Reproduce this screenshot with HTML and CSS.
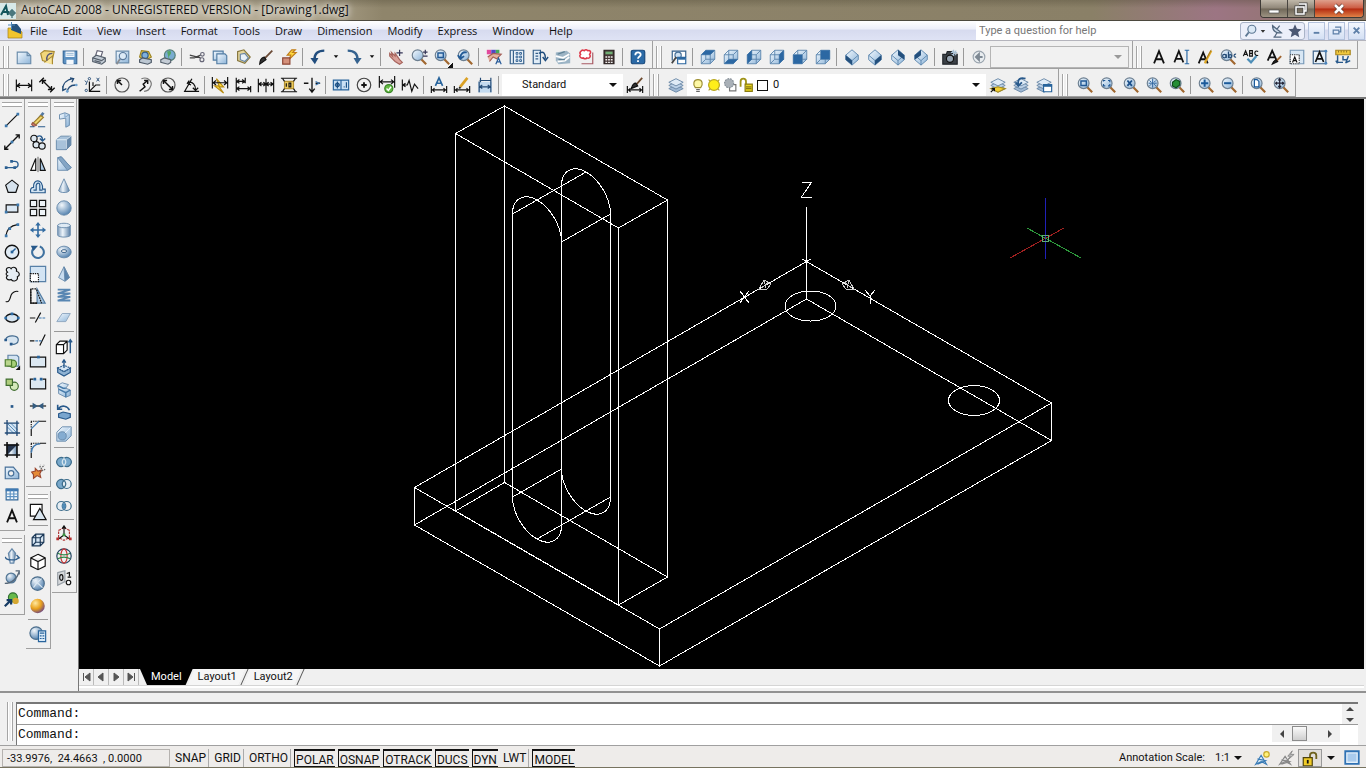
FILE: index.html
```html
<!DOCTYPE html>
<html lang="en">
<head>
<meta charset="utf-8">
<title>AutoCAD 2008 - UNREGISTERED VERSION - [Drawing1.dwg]</title>
<link rel="stylesheet" href="styles.css">
</head>
<body>
<svg class="sprites" aria-hidden="true">
<defs>
<linearGradient id="gb" x1="0" y1="0" x2="1" y2="1"><stop offset="0" stop-color="#f4faff"/><stop offset="1" stop-color="#8db4d8"/></linearGradient>
<linearGradient id="gs" x1="0" y1="0" x2="1" y2="0"><stop offset="0" stop-color="#7f9cba"/><stop offset=".4" stop-color="#edf4fa"/><stop offset="1" stop-color="#5b80a6"/></linearGradient>
<radialGradient id="gr" cx=".35" cy=".3" r=".8"><stop offset="0" stop-color="#f2f7fb"/><stop offset="1" stop-color="#4577a8"/></radialGradient>
<radialGradient id="go" cx=".35" cy=".3" r=".8"><stop offset="0" stop-color="#ffe9a0"/><stop offset=".5" stop-color="#e9a11c"/><stop offset="1" stop-color="#5a3990"/></radialGradient>
</defs>
<!-- shared pieces -->
<symbol id="lens" viewBox="0 0 20 20"><path d="M12 12l6 6" stroke="#a0672f" stroke-width="2.4"/><circle cx="8.500" cy="8" r="6" fill="url(#gb)" stroke="#6d7f90"/></symbol>
<symbol id="dimh" viewBox="0 0 20 20"><path d="M1.500 4v13M18.500 4v13M2 10.500h16M5.500 8l-3 2.500 3 2.500M14.500 8l3 2.500-3 2.500"/></symbol>
<symbol id="dimlow" viewBox="0 0 20 20"><path d="M1.500 11v8M18.500 11v8M2 15.500h16M5 13.500l-2 2 2 2M15 13.500l2 2-2 2"/></symbol>
<symbol id="sheets" viewBox="0 0 20 20"><g stroke="#6886a5" stroke-width="1"><path d="M2 14l8-4 8 4-8 4z" fill="#9eb8d4"/><path d="M2 10.500l8-4 8 4-8 4z" fill="#bdd2e8"/><path d="M2 7l8-4 8 4-8 4z" fill="#dfebf6"/></g></symbol>
<symbol id="cube" viewBox="0 0 20 20"><g stroke="#5a84ad" stroke-width="1"><path d="M2.500 7.500l5-5h10v10l-5 5h-10z" fill="url(#gb)"/><path d="M2.500 7.500h10v10M12.500 7.500l5-5M7.500 2.500v10h10M7.500 12.500l-5 5"/></g></symbol>
<symbol id="gem" viewBox="0 0 20 20"><g stroke="#5a84ad" stroke-width="1"><path d="M10 2l7 6v5l-7 6-7-6V8z" fill="url(#gb)"/><path d="M3 8l7 6 7-6M10 14v5"/></g></symbol>
<!-- standard -->
<symbol id="new" viewBox="0 0 20 20"><path d="M2.500 4.500h11l4 4v9h-15z" fill="url(#gb)" stroke="#6a8cab"/><path d="M13.500 4.500v4h4" stroke="#6a8cab"/></symbol>
<symbol id="open" viewBox="0 0 20 20"><path d="M3 6l4-3 11 1-3 13-10-3z" fill="#f1d67a" stroke="#a98a31"/><path d="M7 16l9-7v9" fill="#fae79f" stroke="#a98a31"/><path d="M16 6c-5 0-7 3-6 8" stroke="#557" stroke-width="1.600"/></symbol>
<symbol id="save" viewBox="0 0 20 20"><path d="M2.500 3.500h15v14h-14l-1-1z" fill="#5c91c2" stroke="#386a9b"/><path d="M5 4h10v6H5zM6 13h8v5H6z" fill="#f4f8fc" stroke="none"/><path d="M6 6h8M6 8h8" stroke="#8fb2d1" stroke-width="1"/></symbol>
<symbol id="print" viewBox="0 0 20 20"><path d="M6 9l2-6 6 1-2 6" fill="#fff" stroke="#667"/><path d="M3 11l4-3 10 3v4l-4 3-10-3z" fill="#c4cdd6" stroke="#555f6b"/><path d="M3 11l10 3 4-3M5 14l7 2" stroke="#555f6b"/></symbol>
<symbol id="preview" viewBox="0 0 20 20"><path d="M3.500 3.500h14v13h-14z" fill="url(#gb)" stroke="#6a8cab"/><path d="M8 12l-4 6" stroke="#8a8d92" stroke-width="2"/><circle cx="11" cy="9" r="4" fill="#dceaf6" stroke="#58789b"/></symbol>
<symbol id="publish" viewBox="0 0 20 20"><path d="M6 3l8 1 3 6-7 4-6-4z" fill="#f0d052" stroke="#9c8422"/><circle cx="10" cy="8" r="3.500" fill="#7fb0dd" stroke="#315c88"/><path d="M4 13l3-2 10 2v3l-4 2-9-2z" fill="#bcc7d2" stroke="#4d5967"/></symbol>
<symbol id="globe" viewBox="0 0 20 20"><circle cx="12" cy="8" r="6" fill="#79acd0" stroke="#557e77"/><path d="M9 4c4-2 6 1 3 4s2 4-1 5" fill="#53a566" stroke="none"/><path d="M2 13l4-2 7 2v3l-3 2-8-2z" fill="#c4ccd5" stroke="#56616d"/></symbol>
<symbol id="cut" viewBox="0 0 20 20"><path d="M2 8l12 3M2 11h5l7-3" stroke="#444" stroke-width="1.500"/><circle cx="16" cy="7" r="2" stroke="#667"/><circle cx="15.500" cy="13" r="2.200" stroke="#667"/></symbol>
<symbol id="copy" viewBox="0 0 20 20"><g fill="url(#gb)" stroke="#527ca3"><path d="M2.500 3.500h11v10h-11z"/><path d="M6.500 6.500h9l2 2v9h-11z"/></g></symbol>
<symbol id="paste" viewBox="0 0 20 20"><path d="M4 4l7-2 7 8-6 7-8-3z" fill="#e4d59b" stroke="#87773f"/><path d="M7 7l5-1 4 5-4 4-5-2z" fill="#e8f1f9" stroke="#6886a5"/></symbol>
<symbol id="brush" viewBox="0 0 20 20"><path d="M17 3l-9 9" stroke="#6b4a36" stroke-width="2"/><path d="M8 10l2 3-7 5c0-4 2-7 5-8z" fill="#333"/></symbol>
<symbol id="block" viewBox="0 0 20 20"><path d="M13 2l-5 6 4 0-2 5 8-8h-4l3-3z" fill="#ffda3d" stroke="#c07d1d"/><path d="M3 11h8v7H3z" fill="#d5917b" stroke="#8d4635"/></symbol>
<symbol id="undo" viewBox="0 0 20 20"><path d="M17 3C10 3 6 6 6 13" stroke="#214d7e" stroke-width="2.600"/><path d="M1.500 11h9L6.500 18z" fill="#214d7e" stroke="none"/></symbol>
<symbol id="redo" viewBox="0 0 20 20"><path d="M3 3c7 0 11 3 11 10" stroke="#35628f" stroke-width="2.600"/><path d="M9.500 11h9L13.500 18z" fill="#35628f" stroke="none"/></symbol>
<symbol id="down" viewBox="0 0 10 20"><path d="M2.500 8h5L5 11z" fill="#111" stroke="none"/></symbol>
<symbol id="pan" viewBox="0 0 20 20"><path d="M3 6l3 3-1-4 4 4 0-3 5 7 3 3-3 2-5-3-6-6z" fill="#dba29b" stroke="#a7645d"/><path d="M14 2v7M10.500 5.500h7" stroke="#335"/></symbol>
<symbol id="zrt" viewBox="0 0 20 20"><use href="#lens"/><path d="M17 2v5M14.500 4.500h5M14.500 9h5" stroke="#335"/></symbol>
<symbol id="zwin" viewBox="0 0 20 20"><use href="#lens"/><path d="M5.500 5.500h6v5h-6z" stroke="#225a96" stroke-width="1.600"/></symbol>
<symbol id="zprev" viewBox="0 0 20 20"><use href="#lens"/><path d="M5 11c0-5 3-7 7-6M2 8l3 4 4-3" stroke="#225a96" stroke-width="2"/></symbol>
<symbol id="props" viewBox="0 0 20 20"><path d="M2 2h5v5H2z" fill="#e24a9c" stroke="none"/><path d="M7 2h5v5H7z" fill="#5145c5" stroke="none"/><path d="M12 2h4v4h-4z" fill="#46a85b" stroke="none"/><path d="M3 10l6-4 9 1-5 5-4-2-4 5" fill="#e5b39d" stroke="#a35d56"/><path d="M12 18l3-7 3 7M13 15.500h4" stroke="#285b99"/></symbol>
<symbol id="dc" viewBox="0 0 20 20"><path d="M2.500 2.500h15v15h-15z" fill="#e9f1f8" stroke="#345f8a"/><path d="M6 3v14" stroke="#345f8a"/><path d="M9 5h2v2H9zM13 5h2v2h-2zM9 9h2v2H9zM13 9h2v2h-2zM9 13h2v2H9zM13 13h2v2h-2z" stroke="#2a5c8f" stroke-width="1"/></symbol>
<symbol id="tp" viewBox="0 0 20 20"><path d="M2.500 2.500h8v15h-8z" fill="#e1edf7" stroke="#345f8a"/><path d="M5 6h3M5 9h3M5 12h3" stroke="#345f8a"/><path d="M9 6c5-3 7 0 7 6M13 10l3 4 3-4" stroke="#1d4b7c" stroke-width="1.600"/></symbol>
<symbol id="ssm" viewBox="0 0 20 20"><path d="M2 5l12-2 4 3v11l-13 1-3-4z" fill="#9cb4c5" stroke="none"/><path d="M2 9l8 2 7-4M4 15l8-1 5-4" stroke="#fff" stroke-width="2"/><path d="M4 7l8-3M5 13l7 0" stroke="#5e8094"/></symbol>
<symbol id="markup" viewBox="0 0 20 20"><path d="M5 17.500h12.500V5" stroke="#a85a63"/><path d="M4 4c2-3 4-1 4-1 2-2 4 0 4 0 3-1 4 2 2 4 2 3-1 5-3 4-2 2-4 0-4 0-3 1-5-2-3-4-1-1-1-2 0-3z" fill="#fff" stroke="#dd3849" stroke-width="1.700"/></symbol>
<symbol id="calc" viewBox="0 0 20 20"><path d="M4.500 2.500h11v15h-11z" fill="#453635" stroke="#251d1d"/><path d="M6 4h8v3H6z" fill="#6fae74" stroke="none"/><path d="M6 10h8M6 13h8M6 16h8" stroke="#eee" stroke-width="1.500" stroke-dasharray="2 1"/></symbol>
<symbol id="help" viewBox="0 0 20 20"><rect x="2.500" y="2.500" width="15" height="15" rx="2" fill="#2b6aa6" stroke="#194a7d"/><path d="M7 8c0-4 6-4 6-.5 0 2-3 2-3 4.500M10 13.500v2" stroke="#fff" stroke-width="2"/></symbol>
<!-- views -->
<symbol id="named" viewBox="0 0 20 20"><path d="M2.500 14V3.500h15V10" fill="#fff" stroke="#345f8a"/><circle cx="9" cy="8" r="3.500" fill="#cfe2f3" stroke="#456f98"/><path d="M7 10l-5 7" stroke="#444" stroke-width="2"/><path d="M8.500 10.500h9v7h-9z" fill="#fff" stroke="#2a66a0"/><path d="M9 12h8" stroke="#2a66a0" stroke-width="2"/></symbol>
<symbol id="vtop" viewBox="0 0 20 20"><use href="#cube"/><path d="M2.500 7.500l5-5h10l-5 5z" fill="#2c68a3" stroke="none"/></symbol>
<symbol id="vbot" viewBox="0 0 20 20"><use href="#cube"/><path d="M2.500 17.500l5-5h10l-5 5z" fill="#2c68a3" stroke="none"/></symbol>
<symbol id="vleft" viewBox="0 0 20 20"><use href="#cube"/><path d="M2.500 7.500l5-5v10l-5 5z" fill="#2c68a3" stroke="none"/></symbol>
<symbol id="vright" viewBox="0 0 20 20"><use href="#cube"/><path d="M12.500 7.500l5-5v10l-5 5z" fill="#2c68a3" stroke="none"/></symbol>
<symbol id="vfront" viewBox="0 0 20 20"><use href="#cube"/><path d="M2.500 7.500h10v10h-10z" fill="#2c68a3" stroke="none"/></symbol>
<symbol id="vback" viewBox="0 0 20 20"><use href="#cube"/><path d="M7.500 2.500h10v10h-10z" fill="#2c68a3" stroke="none"/></symbol>
<symbol id="isw" viewBox="0 0 20 20"><use href="#gem"/><path d="M3 8l7 6v5l-7-6z" fill="#24507d" stroke="none"/></symbol>
<symbol id="ise" viewBox="0 0 20 20"><use href="#gem"/><path d="M17 8l-7 6v5l7-6z" fill="#24507d" stroke="none"/></symbol>
<symbol id="ine" viewBox="0 0 20 20"><use href="#gem"/><path d="M10 2l7 6v5l-7-5z" fill="#24507d" stroke="none"/></symbol>
<symbol id="inw" viewBox="0 0 20 20"><use href="#gem"/><path d="M10 2L3 8v5l7-5z" fill="#24507d" stroke="none"/></symbol>
<symbol id="camera" viewBox="0 0 20 20"><path d="M2 7h4l1-3h5l1 3h5v11H2z" fill="#3b4147" stroke="#22262b"/><circle cx="10" cy="12" r="4" fill="#95a3b1" stroke="#111"/><path d="M14 2v7M11 5h7M12 3l5 5M17 3l-5 5" stroke="#a9c0d4"/></symbol>
<symbol id="back" viewBox="0 0 20 20"><circle cx="10" cy="10" r="6.500" fill="#e9edf0" stroke="#9aa4ae"/><path d="M14 10H8M10 6.500L6.500 10l3.500 3.500z" stroke="#7e8994" stroke-width="2" fill="#7e8994"/></symbol>
<!-- text -->
<symbol id="ta" viewBox="0 0 20 20"><path d="M4.500 17L10 3.500 15.500 17M6.500 12.500h7" stroke-width="2"/></symbol>
<symbol id="tai" viewBox="0 0 20 20"><path d="M1.500 16L6.500 3.500 11.500 16M3.500 12h6" stroke-width="1.900"/><path d="M13 2.500h5M15.500 3v14M13 17.500h5" stroke="#2868a5"/></symbol>
<symbol id="tapen" viewBox="0 0 20 20"><path d="M3 17L8 5l5 12M5 12.500h6" stroke-width="2"/><path d="M17 3l-6 11-1 3" stroke="#e0a925" stroke-width="2.500"/><path d="M17 2l-6 11" stroke="#7e5b1d" stroke-width=".7"/></symbol>
<symbol id="find" viewBox="0 0 20 20"><use href="#lens"/><circle cx="6" cy="9" r="2" stroke="#234a75"/><path d="M8 7v4M10.500 4v7M19 7c-3-1-3 4 0 3" stroke="#234a75"/><circle cx="12.500" cy="9" r="1.700" stroke="#234a75"/></symbol>
<symbol id="spell" viewBox="0 0 20 20"><path d="M1.500 9l2.500-6 2.500 6M2.500 7h3M8.500 3v6h3V6h-3 3V3zM18 4c-5-3-5 6 0 4" stroke-width="1.300"/><path d="M6 12l4 4 6-7" stroke="#4e8fb8" stroke-width="2.500"/></symbol>
<symbol id="tabrush" viewBox="0 0 20 20"><path d="M3 14L8 3l5 11M5 10.500h6" stroke-width="2"/><path d="M18 9l-6 6" stroke="#a0642f" stroke-width="2"/><path d="M12 13l2 2-6 3c1-3 2-4 4-5z" fill="#222"/></symbol>
<symbol id="tscale" viewBox="0 0 20 20"><path d="M2.500 2.500h15v15h-15z" fill="#d8e7f4" stroke="#7798b8"/><path d="M2.500 7.500h10v10h-10z" fill="#fff" stroke-dasharray="1 1"/><path d="M5 16l2.500-6 2.500 6M6 14h3"/></symbol>
<symbol id="tjust" viewBox="0 0 20 20"><path d="M2.500 3.500h14v14h-14z" fill="#e9f2f9" stroke="#3c6289"/><path d="M5 15.500l4.500-11 4.500 11M6.500 12h6" stroke-width="1.900"/><circle cx="16.500" cy="3.500" r="1.600" fill="#4c85bb" stroke="none"/><circle cx="16.500" cy="17" r="1.600" fill="#4c85bb" stroke="none"/></symbol>
<symbol id="tspace" viewBox="0 0 20 20"><path d="M2 2.500h16v5H2z" fill="#f1c83d" stroke="#a8851e"/><path d="M5 3v2M8 3v2M11 3v2M14 3v2" stroke="#6e5714" stroke-width=".8"/><path d="M4 8v8h6M2 14l2 3M10 9v4h4M16 9l-3 8M14 16l4-2" stroke="#28598b" stroke-width="1.600"/></symbol>
<!-- dimension -->
<symbol id="dal" viewBox="0 0 20 20"><path d="M1.500 7l5-5M13.500 18l5-5M5 5l10 10M5 9V5h4M15 11v4h-4" stroke-width="1.500"/></symbol>
<symbol id="darc" viewBox="0 0 20 20"><path d="M7 18c0-4 3-8 9-8M2 15c0-7 5-11 11-12M10 2l4 1-2 4M2 11v5l4-2" stroke="#234a75" stroke-width="1.500"/><circle cx="7" cy="17" r="1.500" fill="#6fa2cf" stroke="none"/><circle cx="17" cy="10" r="1.500" fill="#6fa2cf" stroke="none"/></symbol>
<symbol id="dord" viewBox="0 0 20 20"><path d="M6 6v11h12M6 17l7-7h5M10 7v4"/><path d="M1 5l1.500 2M4 5l-2 5M14 2l3 4M17 2l-3 4" stroke="#234a75" stroke-width="1"/><circle cx="6" cy="3" r="1.300" stroke="#234a75" stroke-width="1"/><circle cx="2.500" cy="16" r="1.300" stroke="#234a75" stroke-width="1"/></symbol>
<symbol id="drad" viewBox="0 0 20 20"><circle cx="10" cy="10" r="7.800" stroke="#555"/><path d="M10 10L5 5M5 9V5h4" stroke-width="1.700"/></symbol>
<symbol id="djog" viewBox="0 0 20 20"><path d="M6 3c8-3 13 4 10 9-1 3-4 5-7 5" stroke="#777"/><path d="M4 17l6-5-2-3 5-4M9 5h4v4" stroke-width="1.600"/></symbol>
<symbol id="ddia" viewBox="0 0 20 20"><circle cx="10" cy="10" r="7.800" stroke="#555"/><path d="M5 5l10 10M5 9V5h4M15 11v4h-4" stroke-width="1.600"/></symbol>
<symbol id="dang" viewBox="0 0 20 20"><path d="M11 3L3 17h16M7 7c5-1 8 3 8 8M8 5L6 8l4 2M12 13l3 3 3-3" stroke-width="1.400"/></symbol>
<symbol id="quick" viewBox="0 0 20 20"><path d="M6 3l8 9H9l5 7-10-8h5z" fill="#ffdf38" stroke="#b88d17"/><use href="#dimh" y="-3"/></symbol>
<symbol id="dbase" viewBox="0 0 20 20"><path d="M2.500 2v16M12.500 2v6M18.500 11v7M3 6h9M3 14h15M6 4L3 6l3 2M9 4l3 2-3 2M6 12l-3 2 3 2M15 12l3 2-3 2"/></symbol>
<symbol id="dcont" viewBox="0 0 20 20"><path d="M1.500 3v15M10 3v15M18.500 3v15M2 9h16M5 7L2 9l3 2M7 7l3 2-3 2M13 7l-3 2 3 2M15 7l3 2-3 2"/></symbol>
<symbol id="dspace" viewBox="0 0 20 20"><path d="M5 6h10v8H5z" fill="#efce62" stroke="#b89430"/><path d="M1 2.500h18M1 17.500h18M3 3l2 3M3 17l2-3M17 3l-2 3M17 17l-2-3M7 8v4M10 8h2v4h-2z"/></symbol>
<symbol id="dbreak" viewBox="0 0 20 20"><path d="M10 2v15M7 14l3 4 3-4M1 8h5M14 8h5" stroke-width="1.500"/><path d="M14 6l4 2-4 2" stroke="#3f78af"/></symbol>
<symbol id="tol" viewBox="0 0 20 20"><path d="M1.500 4.500h17v11h-17zM10 4.500v11" fill="#c9e0f4" stroke="#28649c"/><circle cx="6" cy="10" r="2" stroke="#1b4f84"/><path d="M6 6v8M3 10h6M13 12h1M16 7v6" stroke="#1b4f84"/></symbol>
<symbol id="cmark" viewBox="0 0 20 20"><circle cx="10" cy="10" r="7.500" stroke="#444"/><path d="M10 7v6M7 10h6" stroke-width="2"/></symbol>
<symbol id="inspect" viewBox="0 0 20 20"><use href="#dimh" y="-4"/><circle cx="12" cy="14" r="4.500" fill="#64bb43" stroke="#3a8527"/><path d="M9.500 14l2 2 3-4" stroke="#fff" stroke-width="1.600"/></symbol>
<symbol id="jog" viewBox="0 0 20 20"><path d="M1.500 4v12M2 10h5l2-5 3 12 3-8 4 5M5 8l-3 2 3 2"/></symbol>
<symbol id="dedit" viewBox="0 0 20 20"><use href="#dimlow"/><path d="M6 11l4-9 4 9M7.500 8h5" stroke="#28649c" stroke-width="1.800"/></symbol>
<symbol id="dtedit" viewBox="0 0 20 20"><use href="#dimlow"/><path d="M16 2l-8 10" stroke="#dba125" stroke-width="3"/><path d="M8 12l-1 2" stroke="#222" stroke-width="2"/></symbol>
<symbol id="dupd" viewBox="0 0 20 20"><path d="M2.500 6.500h15v12h-15z" fill="#c3daef" stroke="none"/><path d="M3.500 6v12M16.500 2v16M4 12h12M4 5h13M7 10l-3 2 3 2M13 10l3 2-3 2M5 2v5" stroke="#234a75"/></symbol>
<symbol id="dstyle" viewBox="0 0 20 20"><use href="#dimlow"/><path d="M18 2l-7 8" stroke="#6d4a2e" stroke-width="2"/><path d="M11 8l2 3-7 3c1-4 3-6 5-6z" fill="#333"/></symbol>
<!-- layers -->
<symbol id="bulb" viewBox="0 0 16 20"><path d="M5 13C2 9 3 4 8 4s6 5 3 9z" fill="#fdf8a5" stroke="#9c8e31"/><path d="M6 15h4M6 17h4" stroke="#666"/></symbol>
<symbol id="sun" viewBox="0 0 16 20"><path d="M2 4l12 12M14 4L2 16" stroke="#b3a52c"/><circle cx="8" cy="10" r="6" fill="#ffee19" stroke="#b7a520"/></symbol>
<symbol id="vpf" viewBox="0 0 16 20"><path d="M7.500 9.500h7v7h-7z" fill="#fff" stroke="#777"/><circle cx="7" cy="8" r="5" fill="#a9b0b7" stroke="#858e96" stroke-dasharray="2 1"/></symbol>
<symbol id="unlock" viewBox="0 0 16 20"><path d="M2 12V6c0-4 6-4 6 0v4" stroke="#9f9318" stroke-width="2"/><path d="M7 9h8v8H7z" fill="#e9d51d" stroke="#8a7c11"/><path d="M8 12h6M8 14h6" stroke="#8a7c11"/></symbol>
<symbol id="lcur" viewBox="0 0 20 20"><use href="#sheets"/><path d="M2 14l8 4 8-4-8-2z" fill="#f0ce34" stroke="#a68a1d"/><path d="M2 18l4-4M3 14h3v3"/></symbol>
<symbol id="lprev" viewBox="0 0 20 20"><use href="#sheets"/><path d="M15 3c-6-2-9 1-8 6M4 7l3 4 4-4" stroke="#28598b" stroke-width="2"/></symbol>
<symbol id="lstate" viewBox="0 0 20 20"><use href="#sheets"/><path d="M9.500 9.500h9v8h-9z" fill="#fff" stroke="#28649c"/><path d="M9 11h10" stroke="#28649c" stroke-width="2"/></symbol>
<!-- zoom -->
<symbol id="zdyn" viewBox="0 0 20 20"><use href="#lens"/><path d="M5 6V5h2M10 5h2v2M12 9v2h-2M7 11H5V9" stroke="#225a96"/></symbol>
<symbol id="zscale" viewBox="0 0 20 20"><use href="#lens"/><path d="M6 5l5 6M11 5l-5 6" stroke="#1b4f8a" stroke-width="2"/></symbol>
<symbol id="zcen" viewBox="0 0 20 20"><use href="#lens"/><path d="M5 5l2 2M12 5l-2 2M5 11l2-2M12 11l-2-2M8.500 3v10M4 8h9" stroke="#225a96" stroke-width="1"/></symbol>
<symbol id="zobj" viewBox="0 0 20 20"><use href="#lens"/><path d="M5 7l4-3 4 2v4l-4 3-4-2z" fill="#258e36" stroke="#0f4b1a"/></symbol>
<symbol id="zin" viewBox="0 0 20 20"><use href="#lens"/><path d="M8.500 4v8M4.500 8h8" stroke="#1b5a9a" stroke-width="2.200"/></symbol>
<symbol id="zout" viewBox="0 0 20 20"><use href="#lens"/><path d="M4.500 8h8" stroke="#1b5a9a" stroke-width="2.200"/></symbol>
<symbol id="zall" viewBox="0 0 20 20"><use href="#lens"/><path d="M6 4h3l2 2v6H6z" fill="#fff" stroke="#1b5a9a"/></symbol>
<symbol id="zext" viewBox="0 0 20 20"><use href="#lens"/><path d="M8.500 3v10M3.500 8h10M7 5l1.500-2L10 5M7 11l1.500 2 1.500-2M5.500 6.500L4 8l1.500 1.500M11.500 6.500L13 8l-1.500 1.500" stroke="#223"/></symbol>
<!-- draw -->
<symbol id="line" viewBox="0 0 20 20"><path d="M4 16L16 4"/><path d="M2 15h3v3H2zM15 2h3v3h-3z" fill="#3c78ad" stroke="none"/></symbol>
<symbol id="xline" viewBox="0 0 20 20"><path d="M2 18L18 2M2 14v4h4M14 2h4v4" stroke-width="1.500"/><path d="M8.500 8.500h3v3h-3z" fill="#3c78ad" stroke="none"/></symbol>
<symbol id="pline" viewBox="0 0 20 20"><path d="M3 14h10c5 0 5-7 0-7h-3" stroke="#2b5f91" stroke-width="1.500"/><path d="M2 12.500h3v3H2zM11.500 12.500h3v3h-3zM8 5.500h3v3H8z" fill="#2b5f91" stroke="none"/></symbol>
<symbol id="polygon" viewBox="0 0 20 20"><path d="M10 3.500l7 5.500-2.700 8H5.700L3 9z" fill="#d6e2ed"/></symbol>
<symbol id="rect" viewBox="0 0 20 20"><path d="M3.500 6.500h13v8h-13z" fill="#dbe8f4"/><path d="M2 13h3v3H2zM15 5h3v3h-3z" fill="#3c78ad" stroke="none"/></symbol>
<symbol id="arc" viewBox="0 0 20 20"><path d="M3 17C4 10 8 5 16 4"/><path d="M2 15h3v3H2zM6 7h3v3H6zM15 2.500h3v3h-3z" fill="#3c78ad" stroke="none"/></symbol>
<symbol id="circle" viewBox="0 0 20 20"><circle cx="10" cy="10" r="7.500" fill="#e0ebf5" stroke-width="1.500"/><path d="M10 10l4-4" stroke="#28649c" stroke-width="1.600"/><path d="M8.500 8.500h3v3h-3z" fill="#28649c" stroke="none"/></symbol>
<symbol id="cloud" viewBox="0 0 20 20"><path d="M5 8C1 4 7 1 9 4c2-3 7-1 6 3 4 1 4 5 1 6 1 5-5 6-7 3-4 2-7-2-4-4-2-1-2-3 0-4z" fill="#e6edf3"/></symbol>
<symbol id="spline" viewBox="0 0 20 20"><path d="M3 16c4 2 5-4 6-7s5-5 8-4"/></symbol>
<symbol id="ellipse" viewBox="0 0 20 20"><ellipse cx="10" cy="10" rx="7" ry="4.500" fill="#d6e4f0" stroke-width="1.500"/><path d="M8.500 4h3v3h-3zM1.500 8.500h3v3h-3zM15.500 8.500h3v3h-3z" fill="#2e6ba4" stroke="none"/></symbol>
<symbol id="earc" viewBox="0 0 20 20"><path d="M3 9c2-5 14-5 14 1 0 4-5 6-8 4" fill="#d6e4f0" stroke="#456b8f"/><path d="M1.500 8.500h3v3h-3zM7.500 13h3v3h-3z" fill="#28598b" stroke="none"/></symbol>
<symbol id="insert" viewBox="0 0 20 20"><path d="M5.500 2.500h10l2 2v10h-12z" fill="#d3e3f2" stroke="#5d81a4"/><circle cx="11" cy="12" r="4" fill="#a7d078" stroke="#4d7e2f"/><path d="M2.500 7.500h7v7h-7z" fill="#bad68e" stroke="#4d7e2f"/><path d="M14 19h5v-5z" fill="#111" stroke="none"/></symbol>
<symbol id="mkblock" viewBox="0 0 20 20"><circle cx="12.500" cy="12.500" r="4.500" fill="#d4e9ba" stroke="#3f6d2e"/><path d="M3.500 4.500h7v7h-7z" fill="#afcd7d" stroke="#3f6d2e"/></symbol>
<symbol id="point" viewBox="0 0 20 20"><path d="M8.500 9h3v3h-3z" fill="#28598b" stroke="none"/></symbol>
<symbol id="hatch" viewBox="0 0 20 20"><path d="M4 4h12v12H4z" fill="#d5e5f3" stroke="none"/><path d="M5 9l7 7M5 5l11 11M9 5l7 7" stroke="#4c84b7" stroke-width="1"/><path d="M4.500 1v17M15.500 2v17M1 4.500h17M2 15.500h17" stroke="#234a75" stroke-width="1.500"/></symbol>
<symbol id="grad" viewBox="0 0 20 20"><path d="M4 4h12v12H4z" fill="url(#gs)" stroke="none"/><path d="M4 4h12L4 16z" fill="#25344c" stroke="none"/><path d="M4.500 1v17M15.500 2v17M1 4.500h17M2 15.500h17" stroke-width="1.800"/></symbol>
<symbol id="region" viewBox="0 0 20 20"><path d="M2.500 4.500h9l6 7v6h-15z" fill="url(#gb)" stroke="#466f98"/><circle cx="9" cy="11.500" r="3" fill="#f0f0f0" stroke="#466f98"/></symbol>
<symbol id="table" viewBox="0 0 20 20"><path d="M3.500 4.500h13v12h-13z" fill="#f3f8fc" stroke="#356999"/><path d="M3 5.500h14" stroke="#3e79b3" stroke-width="3"/><path d="M3.500 10h13M3.500 13h13M8 6v10M12 6v10" stroke="#5c91c2"/></symbol>
<symbol id="orbit" viewBox="0 0 20 20"><path d="M10 2l4 5-2 11H8L6 7z" fill="url(#gs)" stroke="#6789aa"/><path d="M3 11c-2 4 15 5 14 0M15 9l3 3-4 2" stroke="#315f8d" stroke-width="1.500"/></symbol>
<symbol id="fly" viewBox="0 0 20 20"><circle cx="9" cy="10" r="5.500" fill="url(#gr)" stroke="#547795"/><path d="M2 16c8 0 14-6 16-13M14 2h4v4" stroke="#567" stroke-width="1.500"/></symbol>
<symbol id="walk" viewBox="0 0 20 20"><circle cx="11" cy="7" r="5" fill="#67b94b" stroke="#327033"/><circle cx="14" cy="11" r="3.500" fill="#d5a832" stroke="none"/><path d="M2 17l7-7M4 10h5v5" stroke="#153b64" stroke-width="2.500"/></symbol>
<!-- modify -->
<symbol id="erase" viewBox="0 0 20 20"><path d="M16 2l-6 8" stroke="#5478a0" stroke-width="3"/><path d="M13 5l3 2-8 8-4-1z" fill="#f0d76e" stroke="#9b7c2c"/><path d="M4 13l4 3-3 1-2-2z" fill="#d77d72" stroke="#9b5c4c"/><path d="M1 17.500h5M10 17.500h8" stroke="#28598b"/></symbol>
<symbol id="cpy" viewBox="0 0 20 20"><circle cx="5.500" cy="6" r="3.500" fill="#dde7ef"/><circle cx="8" cy="13" r="3.500" fill="#dde7ef"/><circle cx="14.500" cy="14.500" r="3.500" fill="#dde7ef"/><path d="M9 4c4-2 6 0 6 4M12 6l3 3 3-3" stroke="#28598b" stroke-width="1.600"/></symbol>
<symbol id="mirror" viewBox="0 0 20 20"><path d="M7.500 4v13H2z" fill="#fff"/><path d="M12.500 4v13H18z" fill="#abc9e4"/><path d="M10 2v17" stroke="#555" stroke-width="1"/></symbol>
<symbol id="offset" viewBox="0 0 20 20"><path d="M2 17.500h16v-4h-3c1-12-11-12-10-2-3 0-4 3-3 6z" fill="#d4e5f3" stroke="#28598b"/><path d="M5 14.500h3V9c1-3 4-3 4 0v5.500h3" stroke="#28598b"/></symbol>
<symbol id="array" viewBox="0 0 20 20"><path d="M1.500 1.500h7v7h-7zM11.500 1.500h7v7h-7zM1.500 11.500h7v7h-7zM11.500 11.500h7v7h-7z" fill="#eef3f7"/></symbol>
<symbol id="move" viewBox="0 0 20 20"><path d="M10 3v14M3 10h14" stroke="#336ca2" stroke-width="1.800"/><path d="M7 5l3-4 3 4zM7 15l3 4 3-4zM5 7l-4 3 4 3zM15 7l4 3-4 3z" fill="#336ca2" stroke="none"/></symbol>
<symbol id="rotate" viewBox="0 0 20 20"><path d="M12 4a6.500 6.500 0 1 1-7 2" stroke="#3f719f" stroke-width="2.300"/><path d="M2 3h8L5 9z" fill="#28598b" stroke="none"/></symbol>
<symbol id="scale" viewBox="0 0 20 20"><path d="M1.500 1.500h17v17h-17z" fill="#d3e4f3" stroke="#5780a7"/><path d="M1.500 9.500h9v9h-9z" fill="#fff" stroke-dasharray="1.500 1"/></symbol>
<symbol id="stretch" viewBox="0 0 20 20"><path d="M9 2l9 16H9z" fill="#acc8e1" stroke="#527ca3"/><path d="M9 18H2V2h6l6 16" stroke-dasharray="2 1"/><path d="M2 2v16h7"/></symbol>
<symbol id="trim" viewBox="0 0 20 20"><path d="M1 10h6M7 15l6-11"/><path d="M11 10h8" stroke="#3f78af" stroke-dasharray="3 1"/></symbol>
<symbol id="extend" viewBox="0 0 20 20"><path d="M1 11h5M12 16l6-12"/><path d="M7 11h7" stroke="#3f78af" stroke-dasharray="3 1"/></symbol>
<symbol id="brkpt" viewBox="0 0 20 20"><path d="M1.500 4.500h17v11h-17z" fill="#dce8f2"/><path d="M9 3h3v3H9z" fill="#28649c" stroke="none"/></symbol>
<symbol id="brk" viewBox="0 0 20 20"><path d="M5 4.500H1.500v11h17v-11H15" fill="#dce8f2"/><path d="M5 3h3v3H5zM12 3h3v3h-3z" fill="#28649c" stroke="none"/></symbol>
<symbol id="join" viewBox="0 0 20 20"><path d="M1 10h18"/><path d="M4 6.500l6 3.500-6 3.500zM16 6.500L10 10l6 3.500z" fill="#345c80" stroke="none"/></symbol>
<symbol id="chamfer" viewBox="0 0 20 20"><path d="M2.500 19v-8M11 2.500h8"/><path d="M2 2.500h9M2.500 3v7" stroke-dasharray="1.500 1"/><path d="M2.500 11L11 2.500" stroke="#3f78af"/></symbol>
<symbol id="fillet" viewBox="0 0 20 20"><path d="M2 2.500h10M2.500 3v9" stroke-dasharray="1.500 1"/><path d="M2.500 13c0-6 4-10 10-10" stroke="#3f78af" stroke-width="1.700"/><path d="M2.500 19v-6M12 2.500h7"/></symbol>
<symbol id="explode" viewBox="0 0 20 20"><path d="M3 10l4-1 0-3 3 3 4-1-2 4 1 4-4-2-4 3 0-4z" fill="#e58b36" stroke="#9c482f"/><path d="M13 7l4-5M14 9l4-2M12 5l1-3" stroke="#666" stroke-dasharray="2 1"/></symbol>
<symbol id="order" viewBox="0 0 20 20"><path d="M1.500 1.500h13v13h-13z" fill="#fff"/><path d="M12 6l7 12.500H5z" fill="#d9e5ef"/></symbol>
<symbol id="wire" viewBox="0 0 20 20"><path d="M3.500 7.500l4-4h9v9l-4 4h-9zM3.500 7.500h9v9M12.500 7.500l4-4M7.500 3.500v9h9M7.500 12.500l-4 4" fill="#d6e6f4" stroke="#193655"/></symbol>
<symbol id="hidden" viewBox="0 0 20 20"><path d="M10 1.500l8 4v9l-8 4-8-4v-9zM2 5.500l8 4 8-4M10 9.500v9" fill="#fff"/></symbol>
<symbol id="real" viewBox="0 0 20 20"><circle cx="9.500" cy="9.500" r="7.500" fill="url(#gr)" stroke="#4d6f8d"/><path d="M4 5c4 2 8 6 11 9M14 4c-4 3-7 6-9 10" stroke="#dce9f3"/></symbol>
<symbol id="concept" viewBox="0 0 20 20"><circle cx="9.500" cy="10" r="8" fill="url(#go)" stroke="none"/></symbol>
<symbol id="vsm" viewBox="0 0 20 20"><circle cx="8" cy="9" r="7" fill="url(#gr)" stroke="#4d6f8d"/><path d="M10.500 6.500h8v12h-8z" fill="#d9e9f7" stroke="#28649c"/><path d="M12 9h5M12 12h2M15 12h2M12 15h2M15 15h2" stroke="#28649c"/></symbol>
<!-- modeling -->
<symbol id="psolid" class="md" viewBox="0 0 20 20"><path d="M5 4l6-2 5 2v12l-4 2V8L5 9z" fill="url(#gb)"/><path d="M11 2v5l5-3" stroke="#7ea3c7"/></symbol>
<symbol id="box" class="md" viewBox="0 0 20 20"><path d="M1.500 7.500l5-4h11v10l-5 5h-11z" fill="#a8c2da"/><path d="M12.500 7.500l5-4v10l-5 5z" fill="#6587a8"/><path d="M1.500 7.500h11v10M12.500 7.500l5-4" stroke="#e6f0f8"/></symbol>
<symbol id="wedge" class="md" viewBox="0 0 20 20"><path d="M3 3l4-1 11 12-4 3H3z" fill="url(#gb)"/><path d="M3 3l11 14 4-3L7 2z" fill="#84a5c5"/></symbol>
<symbol id="cone" class="md" viewBox="0 0 20 20"><path d="M10 2l6 13c-1 3-11 3-12 0z" fill="url(#gs)"/></symbol>
<symbol id="sphere" class="md" viewBox="0 0 20 20"><circle cx="10" cy="10" r="8" fill="url(#gr)"/></symbol>
<symbol id="cyl" class="md" viewBox="0 0 20 20"><path d="M3 5v11c2 2.500 12 2.500 14 0V5z" fill="url(#gs)"/><ellipse cx="10" cy="5" rx="7" ry="2.500" fill="#dfeaf4"/></symbol>
<symbol id="torus" class="md" viewBox="0 0 20 20"><ellipse cx="10" cy="10" rx="8" ry="6.500" fill="url(#gr)"/><ellipse cx="10" cy="9" rx="3" ry="1.600" fill="#f0f0f0" stroke="#315a84"/></symbol>
<symbol id="pyr" class="md" viewBox="0 0 20 20"><path d="M10 2l6 12-5 4-7-4z" fill="#c8dcef"/><path d="M10 2l6 12-5 4z" fill="#5a82ab"/></symbol>
<symbol id="helix" class="md" viewBox="0 0 20 20"><path d="M3 3h14L3 7h14L3 11h14L3 15h14" stroke="#5886b2" stroke-width="2"/></symbol>
<symbol id="plane" class="md" viewBox="0 0 20 20"><path d="M2 14L8 5h9l-5 9z" fill="url(#gb)" stroke="#8ba4bd"/></symbol>
<symbol id="pp" viewBox="0 0 20 20"><path d="M1.500 8.500l4-4h8v10l-4 4h-8zM1.500 8.500h8v10M9.500 8.500l4-4" fill="#fff"/><path d="M17 18V3M15 6l2-3 2 3" stroke="#28598b" stroke-width="1.600"/></symbol>
<symbol id="extr" viewBox="0 0 20 20"><path d="M3 10l7 4 7-4v5l-7 4-7-4z" fill="#8fb2d2" stroke="#28598b"/><path d="M3 10l7-3 7 3-7 4z" fill="#d5e5f3" stroke="#28598b" stroke-dasharray="2 1"/><path d="M10 10V2M8 4l2-3 2 3" stroke="#28598b" stroke-width="1.500"/></symbol>
<symbol id="sweep" class="md" viewBox="0 0 20 20"><path d="M3 5l5-3 7 2-3 4 5 2v6l-5 2-8-4v-5z" fill="url(#gb)"/><path d="M3 5l6 3 3 0M4 9l8 4 5-3M12 13v5" stroke="#467aa9" stroke-width="1.600"/></symbol>
<symbol id="revolve" viewBox="0 0 20 20"><path d="M4 12l5-2 8 2v4l-5 2-8-2z" fill="#79a5ce" stroke="#28598b"/><path d="M16 8C14 3 7 2 4 6M3 2v5h5" stroke="#28598b" stroke-width="1.800"/></symbol>
<symbol id="loft" class="md" viewBox="0 0 20 20"><path d="M2 8l6-6h10v10l-6 6H2z" fill="url(#gb)"/><circle cx="8" cy="12" r="4.500" fill="#84acd1"/><path d="M11 9l6-6" stroke="#e9f3fb"/></symbol>
<symbol id="union" viewBox="0 0 20 20"><path d="M10 6a5 5 0 1 0 0 8 5 5 0 1 0 0-8z" fill="#78a8cb" stroke="#3d6d8c"/><path d="M10 6q-4 4 0 8q4-4 0-8" stroke="#d7e6ef"/></symbol>
<symbol id="subtract" viewBox="0 0 20 20"><circle cx="13" cy="10" r="5" fill="#e5edf3" stroke="#3d6d8c"/><path d="M10 6a5 5 0 1 0 0 8q-4-4 0-8" fill="#78a8cb" stroke="#3d6d8c"/><path d="M10 6q4 4 0 8" stroke="#3d6d8c"/></symbol>
<symbol id="inter" viewBox="0 0 20 20"><circle cx="7" cy="10" r="5" fill="#e5edf3" stroke="#3d6d8c"/><circle cx="13" cy="10" r="5" stroke="#3d6d8c"/><path d="M10 6q-4 4 0 8q4-4 0-8" fill="#508bb7" stroke="none"/></symbol>
<symbol id="m3d" viewBox="0 0 20 20"><path d="M10 3l6 3v8l-6 3-6-3V6z" stroke="#b23c3c" stroke-dasharray="3 1"/><path d="M10 2v9l7 5M10 11l-7 5M8 4l2-3 2 3"/><path d="M8.500 9.500h3v3h-3z" fill="#3b9340" stroke="none"/><path d="M1.500 14h3v3h-3zM15.500 14h3v3h-3z" fill="#b43131" stroke="none"/></symbol>
<symbol id="r3d" viewBox="0 0 20 20"><circle cx="10" cy="10" r="8" stroke="#244464"/><ellipse cx="10" cy="10" rx="3.500" ry="8" stroke="#c53636"/><path d="M3 7c4 2 10 2 14 0M3 13c4-2 10-2 14 0" stroke="#2d8744"/></symbol>
<symbol id="align" viewBox="0 0 20 20"><path d="M3 4l8-2v12l-8 4z" fill="#d6d9dc" stroke="#98a0a7"/><ellipse cx="7" cy="9.500" rx="1.800" ry="3.200"/><path d="M13 5l3-1v4M14 9h4"/><circle cx="15" cy="15" r="2.500" fill="#fff"/></symbol>
<!-- status tray -->
<symbol id="annv" viewBox="0 0 20 20"><path d="M3 17L9 7l6 10-6-3zM5 11l9 2-9 4" fill="#dcecf8" stroke="#397bb5"/><circle cx="15" cy="6" r="3" fill="#fff27a" stroke="#c8a92c"/></symbol>
<symbol id="anna" viewBox="0 0 20 20"><path d="M3 17L9 8l6 9-6-3zM5 12l9 2-9 3" fill="#ddd" stroke="#888"/><path d="M17 2l-5 6h3l-5 6 9-8h-4z" fill="#bbb" stroke="#888" stroke-width="1"/></symbol>
<symbol id="lock" viewBox="0 0 20 20"><path d="M10 10V6c0-4 7-4 7 0v4" stroke="#6f621d" stroke-width="2"/><path d="M2.500 8.500h10v9h-10z" fill="#f0cb26" stroke="#4f430c"/><path d="M7.500 11v4" stroke-width="2"/></symbol>
</svg>

<header class="titlebar">
  <svg class="app-logo" viewBox="0 0 16 18" aria-hidden="true"><path d="M0 2h16v16H0z" fill="#d7e9e8"/><path d="M1 14l5-9 2 9M3 11h6" fill="none" stroke="#12565b" stroke-width="2"/><path d="M12 8v9M8 12h8M10 10h4v4h-4z" fill="#e9f6f4" stroke="#174f57" stroke-width="1"/></svg>
  <h1>AutoCAD 2008 - UNREGISTERED VERSION - [Drawing1.dwg]</h1>
  <div class="winbuttons">
    <button aria-label="Minimize"><svg viewBox="0 0 16 14"><path d="M3 8h10v3H3z" fill="#fff" stroke="#555" stroke-width=".7"/></svg></button>
    <button aria-label="Restore"><svg viewBox="0 0 16 14"><path d="M6 2h7v7h-2M3 5h8v7H3z" fill="none" stroke="#444" stroke-width="3"/><path d="M6 2h7v7h-2M3 5h8v7H3z" fill="none" stroke="#fff" stroke-width="1.500"/></svg></button>
    <button class="close" aria-label="Close"><svg viewBox="0 0 16 14"><path d="M4 3l8 8M12 3l-8 8" stroke="#63392f" stroke-width="4"/><path d="M4 3l8 8M12 3l-8 8" stroke="#fff" stroke-width="2.600"/></svg></button>
  </div>
</header>

<nav class="menubar">
  <svg class="doc-logo" viewBox="0 0 16 18" aria-hidden="true"><path d="M1 6h9l5 4v6H1z" fill="#f2c52e" stroke="#a37e18" stroke-width=".7"/><path d="M5 2h5l4 5v5L4 8z" fill="#27527b"/><path d="M1 3h7M4.500 0v7" stroke="#4f88b9"/></svg>
  <button>File</button><button>Edit</button><button>View</button><button>Insert</button><button>Format</button><button>Tools</button><button>Draw</button><button>Dimension</button><button>Modify</button><button>Express</button><button>Window</button><button>Help</button>
  <input class="question" type="text" aria-label="Type a question for help" placeholder="Type a question for help">
  <div class="info">
    <button aria-label="Search"><svg viewBox="0 0 26 18"><circle cx="10" cy="7" r="4.500" fill="#dbe8f5" stroke="#5d7894" stroke-width="1.300"/><path d="M6.500 10.500L3 15" stroke="#5d7894" stroke-width="2"/><path d="M20 8h5l-2.500 3z" fill="#333"/></svg></button>
    <button aria-label="Communication Center"><svg viewBox="0 0 18 18"><path d="M4 3c0 6 4 9 10 8L4 3zM12 3L9 7M5 16h9M9 11l-3 5" fill="#cfdcec" stroke="#54687f" stroke-width="1.400"/></svg></button>
    <button aria-label="Favorites"><svg viewBox="0 0 18 18"><path d="M9 1.500l2.200 5 5.300.5-4 3.500 1.300 5.500L9 13.200 4.200 16l1.300-5.500-4-3.500 5.300-.5z" fill="#4c5873"/></svg></button>
  </div>
  <div class="docbuttons">
    <button aria-label="Minimize drawing"><svg viewBox="0 0 16 16"><path d="M5 10.500h6" stroke="#5d7fa8" stroke-width="2"/></svg></button>
    <button aria-label="Restore drawing"><svg viewBox="0 0 16 16"><path d="M6.500 4.500h6v5h-2M4.500 7.500h6v4h-6z" fill="none" stroke="#5d7fa8" stroke-width="1.300"/></svg></button>
    <button aria-label="Close drawing"><svg viewBox="0 0 16 16"><path d="M5 5l6 6M11 5l-6 6" stroke="#5d7fa8" stroke-width="2"/></svg></button>
  </div>
</nav>

<div class="toolrow">
  <div class="toolbar" role="toolbar" aria-label="Standard">
    <i class="grip"></i>
    <button aria-label="New"><svg><use href="#new"/></svg></button><button aria-label="Open"><svg><use href="#open"/></svg></button><button aria-label="Save"><svg><use href="#save"/></svg></button><i class="sep"></i>
    <button aria-label="Plot"><svg><use href="#print"/></svg></button><button aria-label="Plot Preview"><svg><use href="#preview"/></svg></button><button aria-label="Publish"><svg><use href="#publish"/></svg></button><button aria-label="3D DWF"><svg><use href="#globe"/></svg></button><i class="sep"></i>
    <button aria-label="Cut"><svg><use href="#cut"/></svg></button><button aria-label="Copy"><svg><use href="#copy"/></svg></button><button aria-label="Paste"><svg><use href="#paste"/></svg></button><button aria-label="Match Properties"><svg><use href="#brush"/></svg></button><button aria-label="Block Editor"><svg><use href="#block"/></svg></button><i class="sep"></i>
    <button aria-label="Undo"><svg><use href="#undo"/></svg></button><button class="drop" aria-label="Undo list"><svg><use href="#down"/></svg></button><button aria-label="Redo"><svg><use href="#redo"/></svg></button><button class="drop" aria-label="Redo list"><svg><use href="#down"/></svg></button><i class="sep"></i>
    <button aria-label="Pan"><svg><use href="#pan"/></svg></button><button aria-label="Zoom Realtime"><svg><use href="#zrt"/></svg></button><button class="flyout" aria-label="Zoom Window"><svg><use href="#zwin"/></svg></button><button aria-label="Zoom Previous"><svg><use href="#zprev"/></svg></button><i class="sep"></i>
    <button aria-label="Properties"><svg><use href="#props"/></svg></button><button aria-label="DesignCenter"><svg><use href="#dc"/></svg></button><button aria-label="Tool Palettes"><svg><use href="#tp"/></svg></button><button aria-label="Sheet Set Manager"><svg><use href="#ssm"/></svg></button><button aria-label="Markup"><svg><use href="#markup"/></svg></button><button aria-label="QuickCalc"><svg><use href="#calc"/></svg></button><i class="sep"></i>
    <button aria-label="Help"><svg><use href="#help"/></svg></button>
  </div>
  <div class="toolbar" role="toolbar" aria-label="View">
    <i class="grip"></i>
    <button aria-label="Named Views"><svg><use href="#named"/></svg></button><i class="sep"></i>
    <button aria-label="Top"><svg><use href="#vtop"/></svg></button><button aria-label="Bottom"><svg><use href="#vbot"/></svg></button><button aria-label="Left"><svg><use href="#vleft"/></svg></button><button aria-label="Right"><svg><use href="#vright"/></svg></button><button aria-label="Front"><svg><use href="#vfront"/></svg></button><button aria-label="Back"><svg><use href="#vback"/></svg></button><i class="sep"></i>
    <button aria-label="SW Isometric"><svg><use href="#isw"/></svg></button><button aria-label="SE Isometric"><svg><use href="#ise"/></svg></button><button aria-label="NE Isometric"><svg><use href="#ine"/></svg></button><button aria-label="NW Isometric"><svg><use href="#inw"/></svg></button><i class="sep"></i>
    <button aria-label="Create Camera"><svg><use href="#camera"/></svg></button><i class="sep"></i>
    <button aria-label="Previous View"><svg><use href="#back"/></svg></button>
    <div class="combo views"><select aria-label="View control" disabled><option></option></select><i class="caret"></i></div>
  </div>
  <div class="toolbar" role="toolbar" aria-label="Text">
    <i class="grip"></i>
    <button aria-label="Multiline Text"><svg><use href="#ta"/></svg></button><button aria-label="Single Line Text"><svg><use href="#tai"/></svg></button><button aria-label="Edit Text"><svg><use href="#tapen"/></svg></button><button aria-label="Find"><svg><use href="#find"/></svg></button><button aria-label="Spell Check"><svg><use href="#spell"/></svg></button><button aria-label="Text Style"><svg><use href="#tabrush"/></svg></button><button aria-label="Scale Text"><svg><use href="#tscale"/></svg></button><button aria-label="Justify Text"><svg><use href="#tjust"/></svg></button><button aria-label="Convert Distance"><svg><use href="#tspace"/></svg></button>
  </div>
</div>

<div class="toolrow last">
  <div class="toolbar" role="toolbar" aria-label="Dimension">
    <i class="grip"></i>
    <button aria-label="Linear"><svg><use href="#dimh"/></svg></button><button aria-label="Aligned"><svg><use href="#dal"/></svg></button><button aria-label="Arc Length"><svg><use href="#darc"/></svg></button><button aria-label="Ordinate"><svg><use href="#dord"/></svg></button><i class="sep"></i>
    <button aria-label="Radius"><svg><use href="#drad"/></svg></button><button aria-label="Jogged"><svg><use href="#djog"/></svg></button><button aria-label="Diameter"><svg><use href="#ddia"/></svg></button><button aria-label="Angular"><svg><use href="#dang"/></svg></button><i class="sep"></i>
    <button aria-label="Quick Dimension"><svg><use href="#quick"/></svg></button><button aria-label="Baseline"><svg><use href="#dbase"/></svg></button><button aria-label="Continue"><svg><use href="#dcont"/></svg></button><button aria-label="Dimension Space"><svg><use href="#dspace"/></svg></button><button aria-label="Dimension Break"><svg><use href="#dbreak"/></svg></button><i class="sep"></i>
    <button aria-label="Tolerance"><svg><use href="#tol"/></svg></button><button aria-label="Center Mark"><svg><use href="#cmark"/></svg></button><button aria-label="Inspection"><svg><use href="#inspect"/></svg></button><button aria-label="Jogged Linear"><svg><use href="#jog"/></svg></button><i class="sep"></i>
    <button aria-label="Dimension Edit"><svg><use href="#dedit"/></svg></button><button aria-label="Dimension Text Edit"><svg><use href="#dtedit"/></svg></button><button aria-label="Dimension Update"><svg><use href="#dupd"/></svg></button><i class="sep"></i>
    <div class="combo dimstyle"><select aria-label="Dimension style"><option>Standard</option></select><i class="caret"></i></div>
    <button aria-label="Dimension Style"><svg><use href="#dstyle"/></svg></button>
  </div>
  <div class="toolbar" role="toolbar" aria-label="Layers">
    <i class="grip"></i>
    <button aria-label="Layer Properties Manager"><svg><use href="#sheets"/></svg></button>
    <div class="combo layers">
      <span class="layer-state" aria-hidden="true"><svg><use href="#bulb"/></svg><svg><use href="#sun"/></svg><svg><use href="#vpf"/></svg><svg><use href="#unlock"/></svg><i class="swatch"></i></span>
      <select aria-label="Layer"><option>0</option></select><i class="caret"></i>
    </div>
    <button aria-label="Make Object's Layer Current"><svg><use href="#lcur"/></svg></button><button aria-label="Layer Previous"><svg><use href="#lprev"/></svg></button><button aria-label="Layer States"><svg><use href="#lstate"/></svg></button>
  </div>
  <div class="toolbar" role="toolbar" aria-label="Zoom">
    <i class="grip"></i>
    <button aria-label="Zoom Window"><svg><use href="#zwin"/></svg></button><button aria-label="Zoom Dynamic"><svg><use href="#zdyn"/></svg></button><button aria-label="Zoom Scale"><svg><use href="#zscale"/></svg></button><button aria-label="Zoom Center"><svg><use href="#zcen"/></svg></button><button aria-label="Zoom Object"><svg><use href="#zobj"/></svg></button><i class="sep"></i>
    <button aria-label="Zoom In"><svg><use href="#zin"/></svg></button><button aria-label="Zoom Out"><svg><use href="#zout"/></svg></button><i class="sep"></i>
    <button aria-label="Zoom All"><svg><use href="#zall"/></svg></button><button aria-label="Zoom Extents"><svg><use href="#zext"/></svg></button>
  </div>
</div>

<main class="workspace">
  <aside class="docks">
    <div class="dock">
      <div class="palette" role="toolbar" aria-label="Draw"><i class="grip"></i>
        <button aria-label="Line"><svg><use href="#line"/></svg></button><button aria-label="Construction Line"><svg><use href="#xline"/></svg></button><button aria-label="Polyline"><svg><use href="#pline"/></svg></button><button aria-label="Polygon"><svg><use href="#polygon"/></svg></button><button aria-label="Rectangle"><svg><use href="#rect"/></svg></button><button aria-label="Arc"><svg><use href="#arc"/></svg></button><button aria-label="Circle"><svg><use href="#circle"/></svg></button><button aria-label="Revision Cloud"><svg><use href="#cloud"/></svg></button><button aria-label="Spline"><svg><use href="#spline"/></svg></button><button aria-label="Ellipse"><svg><use href="#ellipse"/></svg></button><button aria-label="Ellipse Arc"><svg><use href="#earc"/></svg></button><button aria-label="Insert Block"><svg><use href="#insert"/></svg></button><button aria-label="Make Block"><svg><use href="#mkblock"/></svg></button><button aria-label="Point"><svg><use href="#point"/></svg></button><button aria-label="Hatch"><svg><use href="#hatch"/></svg></button><button aria-label="Gradient"><svg><use href="#grad"/></svg></button><button aria-label="Region"><svg><use href="#region"/></svg></button><button aria-label="Table"><svg><use href="#table"/></svg></button><button aria-label="Text"><svg><use href="#ta"/></svg></button>
      </div>
      <div class="palette" role="toolbar" aria-label="3D Navigation"><i class="grip"></i>
        <button aria-label="Constrained Orbit"><svg><use href="#orbit"/></svg></button><button aria-label="Fly"><svg><use href="#fly"/></svg></button><button aria-label="Walk"><svg><use href="#walk"/></svg></button>
      </div>
    </div>
    <div class="dock">
      <div class="palette" role="toolbar" aria-label="Modify"><i class="grip"></i>
        <button aria-label="Erase"><svg><use href="#erase"/></svg></button><button aria-label="Copy Object"><svg><use href="#cpy"/></svg></button><button aria-label="Mirror"><svg><use href="#mirror"/></svg></button><button aria-label="Offset"><svg><use href="#offset"/></svg></button><button aria-label="Array"><svg><use href="#array"/></svg></button><button aria-label="Move"><svg><use href="#move"/></svg></button><button aria-label="Rotate"><svg><use href="#rotate"/></svg></button><button aria-label="Scale"><svg><use href="#scale"/></svg></button><button aria-label="Stretch"><svg><use href="#stretch"/></svg></button><button aria-label="Trim"><svg><use href="#trim"/></svg></button><button aria-label="Extend"><svg><use href="#extend"/></svg></button><button aria-label="Break at Point"><svg><use href="#brkpt"/></svg></button><button aria-label="Break"><svg><use href="#brk"/></svg></button><button aria-label="Join"><svg><use href="#join"/></svg></button><button aria-label="Chamfer"><svg><use href="#chamfer"/></svg></button><button aria-label="Fillet"><svg><use href="#fillet"/></svg></button><button aria-label="Explode"><svg><use href="#explode"/></svg></button>
      </div>
      <div class="palette" role="toolbar" aria-label="Visual Styles"><i class="grip"></i>
        <button aria-label="Draw Order"><svg><use href="#order"/></svg></button><i class="sep"></i>
        <button aria-label="3D Wireframe"><svg><use href="#wire"/></svg></button><button aria-label="3D Hidden"><svg><use href="#hidden"/></svg></button><button aria-label="Realistic"><svg><use href="#real"/></svg></button><button aria-label="Conceptual"><svg><use href="#concept"/></svg></button><i class="sep"></i>
        <button aria-label="Manage Visual Styles"><svg><use href="#vsm"/></svg></button>
      </div>
    </div>
    <div class="dock">
      <div class="palette" role="toolbar" aria-label="Modeling"><i class="grip"></i>
        <button aria-label="Polysolid"><svg><use href="#psolid"/></svg></button><button aria-label="Box"><svg><use href="#box"/></svg></button><button aria-label="Wedge"><svg><use href="#wedge"/></svg></button><button aria-label="Cone"><svg><use href="#cone"/></svg></button><button aria-label="Sphere"><svg><use href="#sphere"/></svg></button><button aria-label="Cylinder"><svg><use href="#cyl"/></svg></button><button aria-label="Torus"><svg><use href="#torus"/></svg></button><button aria-label="Pyramid"><svg><use href="#pyr"/></svg></button><button aria-label="Helix"><svg><use href="#helix"/></svg></button><button aria-label="Planar Surface"><svg><use href="#plane"/></svg></button><i class="sep"></i>
        <button aria-label="Presspull"><svg><use href="#pp"/></svg></button><button aria-label="Extrude"><svg><use href="#extr"/></svg></button><button aria-label="Sweep"><svg><use href="#sweep"/></svg></button><button aria-label="Revolve"><svg><use href="#revolve"/></svg></button><button aria-label="Loft"><svg><use href="#loft"/></svg></button><i class="sep"></i>
        <button aria-label="Union"><svg><use href="#union"/></svg></button><button aria-label="Subtract"><svg><use href="#subtract"/></svg></button><button aria-label="Intersect"><svg><use href="#inter"/></svg></button><i class="sep"></i>
        <button aria-label="3D Move"><svg><use href="#m3d"/></svg></button><button aria-label="3D Rotate"><svg><use href="#r3d"/></svg></button><button aria-label="3D Align"><svg><use href="#align"/></svg></button>
      </div>
    </div>
  </aside>
  <section class="drawing">
    <svg class="model" viewBox="79 99 1285 570" preserveAspectRatio="xMidYMin meet" role="img" aria-label="Isometric wireframe of a slotted bracket">
      <g fill="none" stroke="#fff" shape-rendering="crispEdges">
        <!-- base plate -->
        <path d="M806.500 261.500L1051.500 403 659.500 629 414.500 487.500z"/>
        <path d="M806.500 299L1051.500 440.500 659.500 666 414.500 525z"/>
        <path d="M806.500 206.500v92.500M1051.500 403v37.500M659.500 629v37M414.500 487.500V525"/>
        <ellipse cx="810.500" cy="306" rx="25.500" ry="15"/>
        <ellipse cx="974" cy="400.500" rx="25.500" ry="15"/>
        <!-- upright plate -->
        <path d="M504.500 106L667.500 200 618.500 228 455.500 133.500z"/>
        <path d="M504.500 482.500L667.500 577 618.500 605 455.500 511z"/>
        <path d="M504.500 106v376.500M455.500 133.500V511M618.500 228v377M667.500 200v377"/>
        <!-- slot -->
        <path d="M512.500 497V214C512.500 198.500 523.500 192.500 537 200S561.500 226.500 561.500 242V525C561.500 540.500 550.500 546.500 537 539S512.500 512.500 512.500 497z"/>
        <path d="M561.500 469V186C561.500 170.500 572.500 164.500 586 172S610.500 198.500 610.500 214V497C610.500 512.500 599.500 518.500 586 511S561.500 484.500 561.500 469z"/>
        <path d="M512.500 214l49-28M537 200l49-28M561.500 242l49-28M512.500 497l49-28M537 539l49-28M561.500 525l49-28"/>
        <!-- coordinate system icon -->
        <path d="M801.500 182.500h10L801.500 197h10M740 291l9 12M749 291l-9 12M865 290l5 6 5-6M870 296v8M802.500 259l8 5M810.500 259l-8 5"/>
        <path d="M759 289l5-9 7 4-4 5zM761 288l7-5M764 280l2 8M854 289l-5-9-7 4 4 5zM852 288l-7-5M849 280l-2 8" stroke="#ccc"/>
        <!-- crosshair -->
        <path d="M1045.500 198v61" stroke="#2020b8"/><path d="M1010 258l54-30" stroke="#a12020"/><path d="M1027 228l54 30" stroke="#2d9a3c"/><path d="M1042.500 235.500h6v6h-6z" stroke="#5fae78"/>
      </g>
    </svg>
    <div class="tabs">
      <button class="nav" aria-label="First layout"><svg viewBox="0 0 14 14"><path d="M4.500 3v8M11 3v8L6 7z"/></svg></button><button class="nav" aria-label="Previous layout"><svg viewBox="0 0 14 14"><path d="M9 3v8L4 7z"/></svg></button><button class="nav" aria-label="Next layout"><svg viewBox="0 0 14 14"><path d="M5 3v8l5-4z"/></svg></button><button class="nav" aria-label="Last layout"><svg viewBox="0 0 14 14"><path d="M10.500 3v8M4 3v8l5-4z"/></svg></button>
      <div class="sheetlist" role="tablist">
        <button class="tab active" role="tab" aria-selected="true">Model</button><button class="tab" role="tab" aria-selected="false">Layout1</button><button class="tab" role="tab" aria-selected="false">Layout2</button>
      </div>
    </div>
  </section>
</main>

<section class="command">
  <i class="grip"></i>
  <div class="console">
    <div class="history"><output>Command:</output>
      <div class="vscroll"><button aria-label="Scroll up"><svg viewBox="0 0 12 8"><path d="M2 6h8L6 2z"/></svg></button><button aria-label="Scroll down"><svg viewBox="0 0 12 8"><path d="M2 3h8L6 7z"/></svg></button></div>
    </div>
    <div class="entry"><label for="cmd">Command:</label><input id="cmd" type="text" autocomplete="off">
      <div class="hscroll"><button aria-label="Scroll left"><svg viewBox="0 0 10 10"><path d="M7 1v8L3 5z"/></svg></button><i class="thumb"></i><button aria-label="Scroll right"><svg viewBox="0 0 10 10"><path d="M3 1v8l4-4z"/></svg></button></div>
    </div>
  </div>
</section>

<footer class="status">
  <output class="coords">-33.9976,&nbsp; 24.4663&nbsp; , 0.0000</output>
  <button>SNAP</button><button>GRID</button><button>ORTHO</button><button class="on" aria-pressed="true">POLAR</button><button class="on" aria-pressed="true">OSNAP</button><button class="on" aria-pressed="true">OTRACK</button><button class="on" aria-pressed="true">DUCS</button><button class="on" aria-pressed="true">DYN</button><button>LWT</button><button class="on" aria-pressed="true">MODEL</button>
  <div class="tray">
    <span>Annotation Scale:</span>
    <button class="scale">1:1 <i class="caret"></i></button>
    <button aria-label="Annotation Visibility"><svg><use href="#annv"/></svg></button>
    <button aria-label="Automatic Annotation"><svg><use href="#anna"/></svg></button>
    <button class="inset" aria-label="Toolbar Lock"><svg><use href="#lock"/></svg></button>
    <button class="menu" aria-label="Status bar menu"><i class="caret"></i></button>
    <button aria-label="Clean Screen"><svg viewBox="0 0 20 20"><path d="M2.500 2.500h15v14h-15z" fill="#e5f1fb" stroke="#2f72b4" stroke-width="2"/><path d="M5 5h10v9H5z" fill="#a9cbed" stroke="none"/></svg></button>
  </div>
</footer>
</body>
</html>
```
FILE: styles.css
```css
* { box-sizing: border-box; }
body {
  margin: 0;
  height: 100vh;
  display: flex;
  flex-direction: column;
  overflow: hidden;
  background: #f0f0f0;
  color: #111;
  font: 12px/16px "Open Sans", "Noto Sans", sans-serif;
}
button {
  padding: 0;
  border: 0;
  background: none;
  color: inherit;
  font: inherit;
}
svg, .caret, .sep { display: block; }
.sprites { position: absolute; width: 0; height: 0; }
.toolbar svg, .palette svg, .tray svg { fill: none; stroke: #111; stroke-width: 1.3; }
.md { stroke: #6789aa; stroke-width: 1; }

/* title bar */
.titlebar {
  flex: none;
  display: flex;
  align-items: center;
  height: 21px;
  border-bottom: 1px solid #4c493e;
  background: linear-gradient(rgba(70, 64, 45, .3), rgba(150, 140, 105, 0) 40%), linear-gradient(90deg, #b9b19c 0, #b3a992 22%, #8f856b 28%, #8a8067 80%, #9c7583 89%, #8b7562 100%);
}
.app-logo { width: 16px; height: 18px; }
.titlebar h1 {
  flex: 1;
  margin: 0 0 0 5px;
  font-size: 12px;
  font-weight: 400;
  line-height: 20px;
  text-shadow: 0 0 6px #fff, 0 0 8px #fff;
}
.winbuttons {
  display: flex;
  align-self: flex-start;
  height: 18px;
  margin-right: 2px;
  border: 1px solid #3e3a36;
  border-top: 0;
  border-radius: 0 0 4px 4px;
  overflow: hidden;
}
.winbuttons button {
  width: 27px;
  display: grid;
  place-items: center;
  border-right: 1px solid #494540;
  background: linear-gradient(#c0b8aa, #8f8678 48%, #706758 52%, #9c9382);
}
.winbuttons .close { width: 48px; border: 0; background: linear-gradient(#dea08c, #cc5a41 48%, #b42a10 52%, #e08247); }
.winbuttons svg { width: 16px; height: 14px; }

/* menu bar */
.menubar {
  flex: none;
  display: flex;
  align-items: center;
  height: 20px;
  border-bottom: 1px solid #b4b4bc;
  background: linear-gradient(#fff, #eef0fa 40%, #d7dbef 50%, #dfe3f5);
  font-size: 11px;
  line-height: 18px;
}
.doc-logo { width: 16px; height: 18px; margin: 0 7px; }
.menubar > button { margin-right: 15px; padding-top: 1px; }
.question {
  width: 264px;
  height: 18px;
  margin-left: auto;
  padding: 0 3px;
  border: 0;
  outline: 0;
  background: #fff;
  font: 11px/16px Roboto, sans-serif;
}
.question::placeholder { color: #777; opacity: 1; }
.info { display: flex; height: 18px; border: 1px solid #aab4c8; background: #eceffa; border-radius: 3px; }
.info svg { width: 18px; height: 16px; }
.info button:first-child svg { width: 27px; }
.docbuttons { display: flex; gap: 3px; margin: 0 1px 0 3px; }
.docbuttons button { width: 17px; height: 18px; border: 1px solid #b3c2dc; background: linear-gradient(#f3f7fe, #d4e0f4); }

/* toolbars */
.toolrow { flex: none; display: flex; height: 28px; }
.toolrow.last { height: 30px; border-bottom: 2px solid #777; }
.toolbar {
  display: flex;
  align-items: center;
  height: 28px;
  padding: 5px 3px 0 0;
  border-right: 1px solid #a0a0a0;
  border-bottom: 1px solid #a0a0a0;
}
.toolbar button { width: 23px; height: 22px; display: grid; place-items: center; }
.toolbar .drop { width: 13px; }
.toolbar .flyout { background: linear-gradient(135deg, transparent 88%, #111 88%); }
.toolbar button svg { width: 18px; height: 18px; }
.toolbar .drop svg { width: 10px; }
.grip { flex: none; }
.toolbar .grip, .command .grip {
  width: 6px;
  height: 22px;
  margin: 0 3px;
  border: solid #a5a5a5;
  border-width: 0 1px;
  background: linear-gradient(90deg, #fff 1px, #f0f0f0 1px 3px, #fff 3px);
}
.toolbar + .toolbar .grip { margin-right: 5px; }
.toolbar .sep { width: 1px; height: 18px; margin: 0 3px 0 2px; background: #999; }
.combo {
  display: grid;
  grid-template-columns: 1fr 14px;
  align-items: center;
  height: 22px;
  background: #fff;
}
.combo select {
  grid-area: 1 / 1 / 2 / 3;
  width: 100%;
  height: 20px;
  padding: 0 16px;
  border: 0;
  outline: 0;
  appearance: none;
  background: transparent;
  color: #111;
  font: 11px/16px Roboto, sans-serif;
}
.caret {
  width: 0;
  height: 0;
  border: solid transparent;
  border-width: 4px 4px 0;
  border-top-color: #111;
}
.combo .caret { grid-area: 1 / 2; pointer-events: none; }
.views { width: 139px; background: #f1f1f1; border: 1px solid #b5b5b5; }
.views .caret { border-top-color: #999; }
.dimstyle { width: 121px; }
.dimstyle select { padding-left: 20px; }
.layers { width: 299px; grid-template-columns: auto 1fr 14px; }
.layers select { grid-area: 1 / 2 / 2 / 4; padding-left: 5px; }
.layers .caret { grid-area: 1 / 3; }
.layer-state { display: flex; align-items: center; padding-left: 3px; }
.layer-state svg { width: 16px; height: 18px; }
.swatch { width: 11px; height: 11px; margin-left: 3px; border: 1px solid #111; }

/* workspace */
.workspace { flex: 1; display: flex; min-height: 0; }
.docks { flex: none; display: flex; width: 79px; border-right: 1px solid #777; }
.dock { width: 26px; }
.palette {
  display: flex;
  flex-direction: column;
  align-items: center;
  width: 25px;
  margin-bottom: 4px;
  padding-bottom: 3px;
  border-right: 1px solid #a0a0a0;
  border-bottom: 1px solid #a0a0a0;
}
.palette .grip {
  width: 20px;
  height: 5px;
  margin: 3px 0 2px;
  border: solid #a5a5a5;
  border-width: 1px 0;
  background: #fff;
}
.palette button { width: 23px; height: 22px; display: grid; place-items: center; }
.palette svg { width: 18px; height: 18px; }
.palette .sep { width: 20px; height: 1px; margin: 2px 0 3px; background: #999; }
.drawing { flex: 1; display: flex; flex-direction: column; min-width: 0; margin-right: 2px; }
.model { flex: 1; width: 100%; min-height: 0; background: #000; }
.tabs { flex: none; display: flex; height: 17px; margin-bottom: 5px; border-bottom: 1px solid #d5d5d5; box-shadow: 0 2px #fff; }
.nav { width: 15px; border-right: 1px solid #bbb; }
.nav svg { width: 14px; height: 14px; fill: #555; stroke: #555; }
.sheetlist { display: flex; margin-left: 1px; font: 11px/16px Roboto, sans-serif; }
.tab {
  height: 16px;
  padding: 0 11px;
  margin-right: -7px;
  clip-path: polygon(0 0, 100% 0, calc(100% - 7px) 100%, 7px 100%);
}
.tab:not(.active) {
  padding: 0 12px;
  background: linear-gradient(113deg, transparent 8px, #f6f6f6 8px calc(100% - 10px), transparent 0);
  clip-path: none;
  position: relative;
}
.tab:not(.active)::after {
  content: "";
  position: absolute;
  inset: 0 4px 0 auto;
  width: 1px;
  background: #555;
  transform: skewX(-24deg);
}
.tab.active { background: #000; color: #fff; }

/* command line */
.command {
  flex: none;
  display: flex;
  height: 55px;
  padding: 9px 8px 0 4px;
  border-top: 2px solid #929292;
  border-bottom: 1px solid #a0a0a0;
}
.command .grip { height: 39px; }
.console {
  flex: 1;
  min-width: 0;
  border: solid #777;
  border-width: 2px 0 0 1px;
  background: #fff;
  font: 13px/20px "Liberation Mono", monospace;
}
.history, .entry { display: flex; height: 20px; padding-left: 1px; }
.history { height: 21px; border-bottom: 1px solid #999; }
.history output { flex: 1; }
.entry input { flex: 1; min-width: 0; border: 0; outline: 0; padding: 0 4px; font: inherit; }
.vscroll { width: 16px; background: #f0f0f0; display: grid; }
.vscroll button { display: grid; place-items: center; }
.vscroll svg { width: 12px; height: 8px; fill: #444; }
.hscroll { display: flex; align-items: center; justify-content: space-between; width: 68px; height: 17px; margin-right: 18px; background: #f0f0f0; }
.hscroll button { width: 20px; height: 17px; display: grid; place-items: center; }
.hscroll svg { width: 10px; height: 10px; fill: #444; }
.thumb { width: 15px; height: 15px; margin-right: 13px; border: 1px solid #8c8c8c; background: linear-gradient(#fafafa, #cfcfcf); }

/* status bar */
.status {
  flex: none;
  display: flex;
  align-items: flex-start;
  gap: 3px;
  height: 22px;
  padding: 3px 2px 0;
  border-bottom: 1px solid #77735f;
  background: #eeecea;
  font: 12px/18px Roboto, sans-serif;
}
.coords { width: 168px; height: 18px; padding-left: 4px; border: 1px solid #b5b2af; font-size: 11px; }
.status > button { height: 18px; padding: 0 2px; border-right: 1px solid #aaa; white-space: nowrap; }
.status > .on { border: 1px solid #111; border-width: 2px 0 1px 1px; padding: 0 1px; }
.tray { display: flex; align-items: center; margin-left: auto; height: 18px; font-size: 11px; }
.tray button { width: 24px; height: 18px; display: grid; place-items: center; }
.tray svg { width: 18px; height: 18px; }
.tray .scale { width: auto; display: flex; align-items: center; gap: 4px; margin: 0 8px 0 10px; }
.tray .inset { border: 1px solid #999; background: #e2dfdb; }
.tray .menu { width: 18px; }
```
